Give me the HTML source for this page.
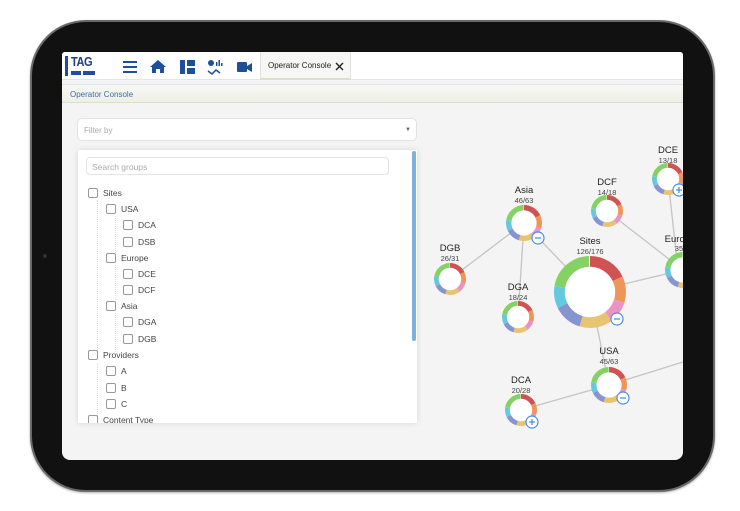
<!DOCTYPE html>
<html><head><meta charset="utf-8"><style>
*{margin:0;padding:0;box-sizing:border-box}
body{width:740px;height:511px;background:#fff;position:relative;overflow:hidden;font-family:"Liberation Sans",sans-serif}
.tab{position:absolute;left:30px;top:20px;width:685px;height:472px;border-radius:56px;background:#111;border:2px solid #6a6a6a;box-shadow:0 1px 2px rgba(0,0,0,.3)}
.cam{position:absolute;left:43px;top:254px;width:4px;height:4px;border-radius:50%;background:#333}
.scr{position:absolute;left:62px;top:52px;width:621px;height:408px;background:#f4f4f4;overflow:hidden;border-radius:3px 3px 8px 8px}
.top{position:absolute;left:0;top:0;width:621px;height:28px;background:#fff;border-bottom:1px solid #dde6ee}
.bc{position:absolute;left:0;top:32px;width:621px;height:19px;background:linear-gradient(#f7f8f4,#eef0e6);border-top:1px solid #dde6ee;border-bottom:1px solid #d8e0d0;font-size:8px;color:#3a6ea8;padding:5px 0 0 8px}
.filter{position:absolute;left:15px;top:66px;width:340px;height:23px;background:#fff;border:1px solid #e2e2e2;border-radius:5px;font-size:8px;color:#aaa;padding:7px 0 0 6px}
.panel{position:absolute;left:16px;top:98px;width:339px;height:273px;background:#fff;box-shadow:0 0 6px rgba(0,0,0,.12);overflow:hidden}
.sb{position:absolute;left:334px;top:1px;width:4px;height:190px;background:#7db0dc;border-radius:2px}
.search{position:absolute;left:8px;top:7px;width:303px;height:18px;border:1px solid #e4e4e4;border-radius:4px;font-size:8.5px;color:#aaa;padding:4px 0 0 5px}
.it{position:absolute;font-size:8.5px;color:#444;height:10px;line-height:9px}
.it:before{content:"";display:inline-block;width:8px;height:8px;border:1px solid #999;border-radius:2px;vertical-align:-2px;margin-right:5px}
.vl{position:absolute;border-left:1px dotted #ddd}
</style></head><body>
<div class="tab"></div><div class="cam"></div>
<div class="scr">
 <div class="top">
  <div style="position:absolute;left:3px;top:4px;width:3px;height:20px;background:#1e4f9a"></div>
  <div style="position:absolute;left:9px;top:2px;font-size:13px;font-weight:bold;color:#1e3f7a;letter-spacing:-0.5px;transform:scaleX(0.85);transform-origin:left">TAG</div>
  <div style="position:absolute;left:9px;top:19px;width:10px;height:4px;background:#1e4f9a"></div>
  <div style="position:absolute;left:21px;top:19px;width:12px;height:4px;background:#1e4f9a"></div>
  <svg style="position:absolute;left:58px;top:5px" width="140" height="20">
   <g fill="#1e4f9a"><rect x="3" y="4" width="14" height="2"/><rect x="3" y="9" width="14" height="2"/><rect x="3" y="14" width="14" height="2"/>
   <path d="M30 10l8-7 8 7h-2v6h-4v-4h-4v4h-4v-6z"/>
   <rect x="60" y="3" width="5" height="14"/><rect x="67" y="3" width="8" height="6"/><rect x="67" y="11" width="8" height="6"/>
   <circle cx="91" cy="6" r="3"/><rect x="96" y="5" width="1.5" height="4"/><rect x="98.5" y="3" width="1.5" height="6"/><rect x="101" y="6" width="1.5" height="3"/>
   <path d="M88 14l4 3 4-4 4 3" stroke="#1e4f9a" stroke-width="1.5" fill="none"/>
   <rect x="117" y="5" width="10" height="10" rx="1"/><path d="M127 9l5-3v9l-5-3z"/></g>
  </svg>
  <div style="position:absolute;left:198px;top:0;width:91px;height:28px;background:#f6f7f4;border-left:1px solid #e2e2e2;border-right:1px solid #e2e2e2;border-bottom:2px solid #d8e2c8;font-size:8px;color:#222;padding:9px 0 0 7px">Operator Console</div>
  <svg style="position:absolute;left:273px;top:10px" width="9" height="9"><path d="M1 1l7 7M8 1l-7 7" stroke="#222" stroke-width="1.4"/></svg>
 </div>
 <div class="bc">Operator Console</div>
 <div class="filter">Filter by<span style="position:absolute;right:5px;top:8px;font-size:6px;color:#666">▼</span></div>
 <div class="panel">
  <div class="sb"></div>
  <div class="search">Search groups</div>
  <div class="vl" style="left:19px;top:50px;height:152px"></div>
  <div class="vl" style="left:37px;top:66px;height:39px"></div>
  <div class="vl" style="left:37px;top:115px;height:39px"></div>
  <div class="vl" style="left:37px;top:163px;height:39px"></div>
  <div class="vl" style="left:19px;top:213px;height:55px"></div>
  <div class="it" style="left:10px;top:38px">Sites</div>
  <div class="it" style="left:28px;top:54px">USA</div>
  <div class="it" style="left:45px;top:70px">DCA</div>
  <div class="it" style="left:45px;top:87px">DSB</div>
  <div class="it" style="left:28px;top:103px">Europe</div>
  <div class="it" style="left:45px;top:119px">DCE</div>
  <div class="it" style="left:45px;top:135px">DCF</div>
  <div class="it" style="left:28px;top:151px">Asia</div>
  <div class="it" style="left:45px;top:167px">DGA</div>
  <div class="it" style="left:45px;top:184px">DGB</div>
  <div class="it" style="left:10px;top:200px">Providers</div>
  <div class="it" style="left:28px;top:216px">A</div>
  <div class="it" style="left:28px;top:233px">B</div>
  <div class="it" style="left:28px;top:249px">C</div>
  <div class="it" style="left:10px;top:265px">Content Type</div>
 </div>
 <svg style="position:absolute;left:0;top:0" width="621" height="408">
  <defs>
   <symbol id="r" viewBox="-10 -10 20 20"><g transform="rotate(-90)" fill="none" stroke-width="3">
    <circle r="8.5" fill="#fff" stroke="none"/>
    <circle r="8.5" pathLength="100" stroke="#d05252" stroke-dasharray="18 100"/>
    <circle r="8.5" pathLength="100" stroke="#f0955a" stroke-dasharray="12 100" stroke-dashoffset="-18"/>
    <circle r="8.5" pathLength="100" stroke="#eb94c4" stroke-dasharray="10 100" stroke-dashoffset="-30"/>
    <circle r="8.5" pathLength="100" stroke="#e8c372" stroke-dasharray="15 100" stroke-dashoffset="-40"/>
    <circle r="8.5" pathLength="100" stroke="#8794d2" stroke-dasharray="13 100" stroke-dashoffset="-55"/>
    <circle r="8.5" pathLength="100" stroke="#64c8de" stroke-dasharray="10 100" stroke-dashoffset="-68"/>
    <circle r="8.5" pathLength="100" stroke="#84d264" stroke-dasharray="22 100" stroke-dashoffset="-78"/>
   </g></symbol>
  </defs>
  <g stroke="#c4c4c4" stroke-width="1.3">
   <line x1="462" y1="171" x2="388" y2="227"/><line x1="462" y1="171" x2="456" y2="265"/><line x1="462" y1="171" x2="528" y2="240"/>
   <line x1="545" y1="159" x2="621" y2="218"/><line x1="606" y1="127" x2="616" y2="218"/><line x1="528" y1="240" x2="621" y2="218"/>
   <line x1="528" y1="240" x2="547" y2="333"/><line x1="459" y1="358" x2="547" y2="333"/><line x1="547" y1="333" x2="621" y2="310"/>
  </g>
  <use href="#r" x="444" y="153" width="36" height="36"/>
  <use href="#r" x="372" y="211" width="32" height="32"/>
  <use href="#r" x="440" y="249" width="32" height="32"/>
  <use href="#r" x="529" y="143" width="32" height="32"/>
  <use href="#r" x="590" y="111" width="32" height="32"/>
  <use href="#r" x="603" y="200" width="36" height="36"/>
  <use href="#r" x="492" y="204" width="72" height="72"/>
  <use href="#r" x="529" y="315" width="36" height="36"/>
  <use href="#r" x="443" y="342" width="32" height="32"/>
  <g fill="#fff" stroke="#4a8fe6" stroke-width="1.2">
   <circle cx="476" cy="186" r="6"/><circle cx="555" cy="267" r="6"/><circle cx="561" cy="346" r="6"/><circle cx="470" cy="370" r="6"/><circle cx="617" cy="138" r="6"/>
  </g>
  <g stroke="#4a8fe6" stroke-width="1.3">
   <path d="M473 186h6M552 267h6M558 346h6M467 370h6M470 367v6M614 138h6M617 135v6"/>
  </g>
  <g font-family="Liberation Sans" text-anchor="middle">
   <g font-size="9.5" fill="#222">
    <text x="462" y="141">Asia</text><text x="388" y="199">DGB</text><text x="456" y="238">DGA</text><text x="545" y="133">DCF</text><text x="606" y="101">DCE</text><text x="528" y="192">Sites</text><text x="547" y="302">USA</text><text x="459" y="331">DCA</text><text x="618" y="190">Europe</text>
   </g>
   <g font-size="7.5" fill="#444">
    <text x="462" y="151">46/63</text><text x="388" y="209">26/31</text><text x="456" y="248">18/24</text><text x="545" y="143">14/18</text><text x="606" y="111">13/18</text><text x="528" y="202">126/176</text><text x="547" y="312">45/63</text><text x="459" y="341">20/28</text><text x="618" y="199">35/</text>
   </g>
  </g>
 </svg>
</div>
</body></html>
